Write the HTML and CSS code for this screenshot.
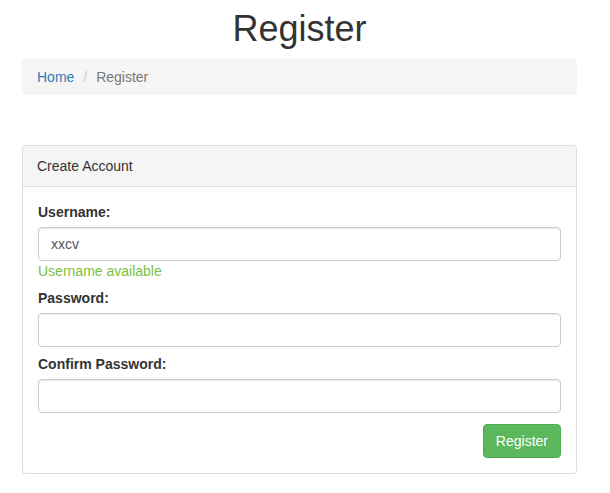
FILE: index.html
```html
<!DOCTYPE html>
<html lang="en">
<head>
    <meta charset="UTF-8">
    <meta name="viewport" content="width=device-width, initial-scale=1.0">
    <title>Register</title>
    <link rel="stylesheet" href="styles.css">
</head>
<body>
    <div class="container">
        <h1>Register</h1>
        <ol class="breadcrumb">
            <li><a href="#">Home</a></li>
            <li class="active">Register</li>
        </ol>

        <div class="panel">
            <div class="panel-heading">Create Account</div>
            <div class="panel-body">
                <form onsubmit="return false;">
                    <div class="form-group">
                        <label for="username">Username:</label>
                        <input type="text" id="username" class="form-control" value="xxcv">
                        <span class="help-text">Username available</span>
                    </div>
                    <div class="form-group">
                        <label for="password">Password:</label>
                        <input type="password" id="password" class="form-control">
                    </div>
                    <div class="form-group">
                        <label for="confirm">Confirm Password:</label>
                        <input type="password" id="confirm" class="form-control">
                    </div>
                    <div class="form-actions">
                        <button type="submit" class="btn-success">Register</button>
                    </div>
                </form>
            </div>
        </div>
    </div>
</body>
</html>
```

FILE: styles.css
```css
body {
    font-family: "Liberation Sans", Arial, sans-serif;
    font-size: 14px;
    line-height: 20px;
    color: #333;
    margin: 0;
    background: #fff;
}
.container {
    width: 555px;
    margin-left: 22px;
}
h1 {
    font-size: 36px;
    font-weight: 500;
    line-height: 40px;
    text-align: center;
    margin: 9px 0 10px;
}
.breadcrumb {
    list-style: none;
    margin: 0 0 50px;
    padding: 8px 15px;
    background-color: #f5f5f5;
    border-radius: 4px;
    display: flex;
}
.breadcrumb li + li {
    margin-left: 4px;
}
.breadcrumb li + li::before {
    content: "/\00a0";
    color: #ccc;
    padding: 0 5px;
}
.breadcrumb a {
    color: #337ab7;
    text-decoration: none;
}
.breadcrumb .active {
    color: #777;
}
.panel {
    border: 1px solid #ddd;
    border-radius: 4px;
    box-shadow: 0 1px 1px rgba(0, 0, 0, 0.05);
    background: #fff;
}
.panel-heading {
    background: #f5f5f5;
    padding: 10px 15px 10px 14px;
    border-bottom: 1px solid #ddd;
    border-radius: 3px 3px 0 0;
}
.panel-body {
    padding: 15px;
}
.form-group {
    margin-bottom: 7px;
}
.form-group label {
    display: block;
    font-weight: bold;
    margin-bottom: 5px;
}
.form-control {
    display: block;
    width: 100%;
    height: 34px;
    box-sizing: border-box;
    padding: 6px 12px;
    font-family: inherit;
    font-size: 14px;
    color: #555;
    border: 1px solid #ccc;
    border-radius: 4px;
    box-shadow: inset 0 1px 1px rgba(0, 0, 0, 0.075);
}
.help-text {
    display: block;
    color: #7ac142;
}
.form-actions {
    display: flex;
    justify-content: flex-end;
    padding-top: 4px;
}
.btn-success {
    height: 34px;
    padding: 6px 12px;
    font-family: inherit;
    font-size: 14px;
    color: #fff;
    background-color: #5cb85c;
    border: 1px solid #4cae4c;
    border-radius: 4px;
    cursor: pointer;
}
```
